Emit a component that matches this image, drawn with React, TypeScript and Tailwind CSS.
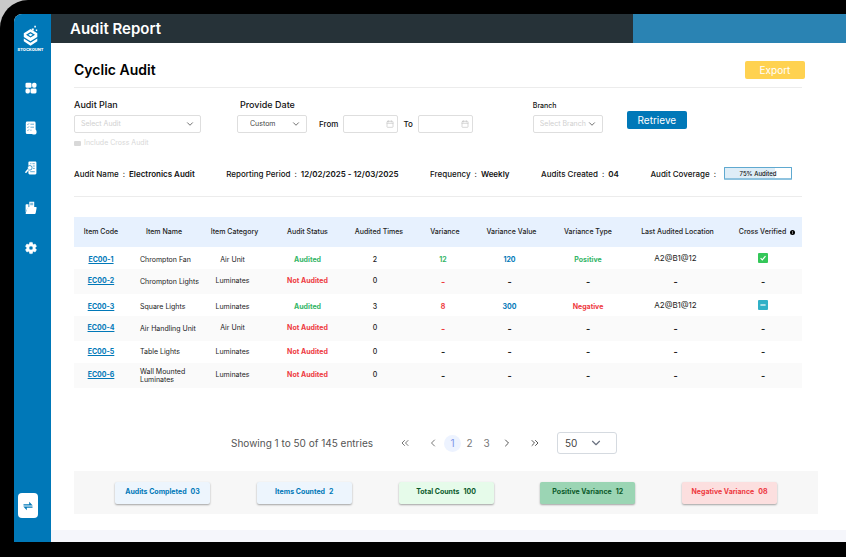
import React from "react";
import { Calendar, ChevronDown, ChevronLeft, ChevronRight, ChevronsLeft, ChevronsRight } from "lucide-react";
import clsx from "clsx";

type Item = {
  code: string;
  name: string;
  category: string;
  audited: boolean;
  flagged?: boolean;
  times: number;
  variance: string;
  value: string;
  type: string;
  location: string;
  cross: "yes" | "partial" | "-";
};

const items: Item[] = [
  { code: "EC00-1", name: "Chrompton Fan", category: "Air Unit", audited: true, times: 2, variance: "12", value: "120", type: "Positive", location: "A2@B1@12", cross: "yes" },
  { code: "EC00-2", name: "Chrompton Lights", category: "Luminates", audited: false, flagged: true, times: 0, variance: "-", value: "-", type: "-", location: "-", cross: "-" },
  { code: "EC00-3", name: "Square Lights", category: "Luminates", audited: true, flagged: true, times: 3, variance: "8", value: "300", type: "Negative", location: "A2@B1@12", cross: "partial" },
  { code: "EC00-4", name: "Air Handling Unit", category: "Air Unit", audited: false, flagged: true, times: 0, variance: "-", value: "-", type: "-", location: "-", cross: "-" },
  { code: "EC00-5", name: "Table Lights", category: "Luminates", audited: false, times: 0, variance: "-", value: "-", type: "-", location: "-", cross: "-" },
  { code: "EC00-6", name: "Wall Mounted Luminates", category: "Luminates", audited: false, times: 0, variance: "-", value: "-", type: "-", location: "-", cross: "-" },
];

const totals = [
  { label: "Audits Completed", value: "03", style: "bg-[#edf5fd] text-[#0078b8]" },
  { label: "Items Counted", value: "2", style: "bg-[#edf5fd] text-[#0078b8]" },
  { label: "Total Counts", value: "100", style: "bg-[#e6fbea] text-[#0b5a2b]" },
  { label: "Positive Variance", value: "12", style: "bg-[#9bd5b4] text-[#0b5a2b]" },
  { label: "Negative Variance", value: "08", style: "bg-[#fcdfdf] text-[#ee3a3f]" },
];

function Logo() {
  return (
    <div className="flex flex-col items-center text-white">
      <svg viewBox="0 0 16 22" className="h-[22px] w-4" fill="currentColor">
        <path d="M7.500 4 14.300 8.300V12L7.500 16.200.800 12V8.300Z" />
        <path d="M.8 13.600 7.500 17.800 14.300 13.600V16.300L7.500 20.800.8 16.300Z" />
        <path d="M3 9.700 7.500 7 12 9.700 7.500 12.600Z" fill="#0078b8" />
        <path d="M5.300 9.800 7.500 8.500 9.700 9.800 7.500 11.200Z" />
        <path d="M8.800 3.400h2v2h-2zM11.300.8h1.600v1.600h-1.600zM12.800 4.600h1.400v1.400h-1.400z" />
      </svg>
      <span className="text-[4px] leading-[6px] font-extrabold">STOCKOUNT</span>
    </div>
  );
}

function DashboardIcon() {
  return (
    <svg viewBox="0 0 12 12" className="size-3" fill="currentColor">
      <rect x="0.5" y="0.8" width="6" height="5" rx="1.3" />
      <rect x="7.1" y="0.8" width="4.400" height="5" rx="1.7" />
      <rect x="0.5" y="6.400" width="4.400" height="5" rx="1.7" />
      <rect x="5.500" y="6.400" width="6" height="5" rx="1.3" />
    </svg>
  );
}

function ChecklistIcon() {
  return (
    <svg viewBox="0 0 12 14" className="h-3.5 w-3" fill="none">
      <rect x="0.8" y="0.5" width="9.8" height="12.600" rx="1.4" fill="white" />
      <path d="m2.300 3 .6.6L4 2.400M2.300 6l.6.6L4 5.400M2.300 9l.6.6L4 8.400M5.400 3.200H9M5.400 6.200H9M5.400 9.200h1.200" stroke="#0078b8" strokeWidth="0.6" />
      <circle cx="9" cy="10.900" r="2.600" fill="white" />
    </svg>
  );
}

function SearchListIcon() {
  return (
    <svg viewBox="0 0 12 14" className="h-3.5 w-3" fill="none">
      <path d="M4.400.5h5.800c.7 0 1.200.5 1.200 1.200v10.400c0 .8-.5 1.300-1.200 1.300H4.600c-.7 0-1.200-.5-1.200-1.300V1.600C3.400 1 3.800.5 4.400.5Z" fill="white" />
      <path d="M5.200 2.700h1.200M7.400 2.700h2.400M7.800 5h2M8 7.400h1.800M5.200 10.700h4.600" stroke="#0078b8" strokeWidth="0.6" />
      <circle cx="4.800" cy="6.800" r="2.300" fill="white" stroke="#0078b8" strokeWidth="0.7" />
      <path d="M3 8.800.9 11.200" stroke="white" strokeWidth="1.5" strokeLinecap="round" />
    </svg>
  );
}

function FolderIcon() {
  return (
    <svg viewBox="0 0 12 14" className="h-3.5 w-3" fill="white">
      <path d="M4.300.8h4.900v6H4.300z" />
      <path d="M5.200 2.300h3M5.200 3.700h3" stroke="#0078b8" strokeWidth="0.6" />
      <path d="M.6 4.300c0-.7.4-1 1-1h1.900v2.600L1.700 8.800.6 11.500Z" />
      <path d="M3.600 6h7.100c.7 0 1 .4.900 1l-.9 5c-.1.600-.5.900-1.100.9H1.400c-.6 0-.9-.4-.7-1L2.500 6.800c.2-.5.500-.8 1.100-.8Z" />
    </svg>
  );
}

function GearIcon() {
  return (
    <svg viewBox="0 0 24 24" className="size-3.5" fill="currentColor" stroke="currentColor" strokeWidth="1">
      <path d="M19.140 12.940c.04-.3.06-.61.06-.94 0-.32-.02-.64-.07-.94l2.030-1.580a.49.49 0 0 0 .12-.61l-1.920-3.320a.488.488 0 0 0-.59-.22l-2.390.96c-.5-.38-1.030-.7-1.620-.94L14.400 2.810a.484.484 0 0 0-.48-.41h-3.840c-.24 0-.43.17-.47.41L9.250 5.350c-.59.24-1.130.57-1.620.94l-2.390-.96a.484.484 0 0 0-.59.22L2.740 8.870c-.12.21-.08.47.12.61l2.030 1.580c-.05.3-.09.63-.09.94s.02.64.07.94l-2.030 1.580a.49.49 0 0 0-.12.61l1.920 3.320c.12.22.37.29.59.22l2.390-.96c.5.38 1.030.7 1.620.94l.36 2.540c.05.24.24.41.48.41h3.840c.24 0 .44-.17.47-.41l.36-2.540c.59-.24 1.130-.56 1.620-.94l2.390.96c.22.08.47 0 .59-.22l1.920-3.320a.49.49 0 0 0-.12-.61zM12 15.600A3.600 3.600 0 1 1 12 8.400a3.600 3.600 0 0 1 0 7.200Z" />
    </svg>
  );
}

const menu = [
  { label: "Dashboard", icon: DashboardIcon },
  { label: "Audit plans", icon: ChecklistIcon },
  { label: "Audit search", icon: SearchListIcon },
  { label: "Files", icon: FolderIcon },
  { label: "Settings", icon: GearIcon },
];

function Sidebar() {
  return (
    <aside className="flex w-[37px] shrink-0 flex-col items-center bg-[#0078b8] pt-[11px] pr-1 pb-6 text-white">
      <Logo />
      <nav className="mt-7 flex flex-col gap-[26px]">
        {menu.map(({ label, icon: Icon }) => (
          <a key={label} href="#" aria-label={label} className="flex h-3.5 items-center justify-center">
            <Icon />
          </a>
        ))}
      </nav>
      <button aria-label="Switch" className="mt-auto mr-1.5 flex h-[25px] w-5 items-center justify-center rounded-[4px] bg-white">
        <svg viewBox="0 0 10 10" className="size-2.5" fill="#0078b8">
          <path d="M.5 3.200h5.700V.8L9.700 4.500H.5ZM9.500 6.800H3.800v2.400L.3 5.500h9.200Z" />
        </svg>
      </button>
    </aside>
  );
}

function Select({ id, text, muted, className }: { id: string; text: string; muted?: boolean; className: string }) {
  return (
    <div className={clsx("relative h-[18px]", className)}>
      <select
        id={id}
        className={clsx(
          "block size-full appearance-none rounded-[2px] border border-[#dedede] bg-white text-[7px] leading-3",
          muted ? "pl-1.5 text-[#d0d0d0]" : "pl-3 text-[#444]"
        )}
      >
        <option>{text}</option>
      </select>
      <ChevronDown className="pointer-events-none absolute top-1 right-1.5 size-2.5 text-[#555]" />
    </div>
  );
}

function DateField({ label }: { label: string }) {
  return (
    <label className="flex h-[18px] items-center gap-[5px] text-[8px] font-medium">
      {label}
      <span className="relative h-[18px] w-[55px]">
        <input type="text" className="block size-full rounded-[2px] border border-[#dedede] px-1 text-[7px]" />
        <Calendar className="pointer-events-none absolute top-[5px] right-1 size-2 text-[#c4c4c4]" />
      </span>
    </label>
  );
}

function Filters() {
  return (
    <div className="flex items-start pt-[11px]">
      <div className="w-[127px]">
        <label htmlFor="plan" className="block text-[9px] leading-[11px] font-medium">Audit Plan</label>
        <Select id="plan" text="Select Audit" muted className="mt-[5px] w-full" />
        <label className="mt-[5px] flex h-2.5 items-center gap-[3px] text-[7px] text-[#d8d8d8]">
          <input type="checkbox" className="h-[5px] w-[7px] appearance-none rounded-[1px] bg-[#d8d8d8]" />
          Include Cross Audit
        </label>
      </div>
      <div className="ml-9">
        <label htmlFor="date" className="block pl-[3px] text-[9px] leading-[11px] font-medium">Provide Date</label>
        <div className="mt-[5px] flex gap-[5px]">
          <Select id="date" text="Custom" className="mr-[7px] w-[70px]" />
          <DateField label="From" />
          <DateField label="To" />
        </div>
      </div>
      <div className="ml-[60px] w-[70px]">
        <label htmlFor="branch" className="block text-[7px] leading-[13px] font-medium">Branch</label>
        <Select id="branch" text="Select Branch" muted className="mt-[3px] w-full" />
      </div>
      <button className="mt-3 ml-6 h-[18px] w-[60px] rounded-[2px] bg-[#0078b8] text-[10px] text-white">Retrieve</button>
    </div>
  );
}

function Info({ label, children }: { label: string; children: React.ReactNode }) {
  return (
    <div className="flex items-center gap-1">
      <span className="font-medium">{label}</span>
      <span>:</span>
      <div className="font-semibold">{children}</div>
    </div>
  );
}

function ItemRow({ item }: { item: Item }) {
  const isEmpty = item.variance === "-";
  const tone = item.type === "Positive" ? "text-[#34b567]" : item.flagged && "text-[#ee3a3f]";
  const dash = isEmpty && "text-[9px]";
  return (
    <tr className="h-[22px] even:h-[25px] even:bg-[#fafafa]">
      <td className={clsx("text-center", item.audited && "pt-1")}>
        <a href="#" className="font-bold text-[#0078b8] underline">{item.code}</a>
      </td>
      <td className={clsx("pl-3 leading-2", item.audited && "pt-1")}>{item.name}</td>
      <td className={clsx("pr-1 text-center", item.audited && "pt-1")}>{item.category}</td>
      <td className={clsx("text-center font-bold", item.audited ? "pt-1 text-[#34b567]" : "text-[#ee3a3f]")}>
        {item.audited ? "Audited" : "Not Audited"}
      </td>
      <td className={clsx("pr-2 text-center font-medium", item.audited && "pt-1")}>{item.times}</td>
      <td className={clsx("pr-1 text-center font-bold", item.audited && "pt-1", tone, dash)}>{item.variance}</td>
      <td className={clsx("pr-1 text-center font-bold", item.audited && "pt-1 text-[#0078b8]", dash)}>{item.value}</td>
      <td className={clsx("text-center font-bold", item.audited && "pt-1", !isEmpty && tone, dash)}>{item.type}</td>
      <td className={clsx("pr-1 text-center", isEmpty ? "text-[9px] font-bold" : "text-[8px]")}>{item.location}</td>
      <td className={clsx("pl-1 text-center font-bold", dash)}>
        {item.cross === "-" ? (
          "-"
        ) : (
          <svg viewBox="0 0 10 10" className="mx-auto size-2.5" fill="none" stroke="white" strokeWidth="1.200">
            <rect width="10" height="10" rx="1" stroke="none" fill={item.cross === "yes" ? "#34c759" : "#30b0c7"} />
            <path d={item.cross === "yes" ? "m2.600 5.100 1.700 1.700 3.200-3.600" : "M2.400 5h5.200"} />
          </svg>
        )}
      </td>
    </tr>
  );
}

function AuditTable() {
  return (
    <table className="mt-5 w-full table-fixed text-[7px] text-[#222]">
      <colgroup>
        <col className="w-[54px]" />
        <col className="w-[76px]" />
        <col className="w-[61px]" />
        <col className="w-[85px]" />
        <col className="w-[58px]" />
        <col className="w-[74px]" />
        <col className="w-[59px]" />
        <col className="w-[94px]" />
        <col className="w-[85px]" />
        <col className="w-[82px]" />
      </colgroup>
      <thead>
        <tr className="h-[30px] bg-[#e7f1fe] whitespace-nowrap [&>th]:font-medium">
          <th>Item Code</th>
          <th className="pr-1">Item Name</th>
          <th>Item Category</th>
          <th>Audit Status</th>
          <th>Audited Times</th>
          <th>Variance</th>
          <th>Variance Value</th>
          <th>Variance Type</th>
          <th>Last Audited Location</th>
          <th>
            <span className="flex items-center justify-center gap-1 pl-3">
              Cross Verified
              <span className="flex size-[5px] items-center justify-center rounded-full bg-black">
                <span className="h-[3px] w-px bg-[#777]" />
              </span>
            </span>
          </th>
        </tr>
      </thead>
      <tbody>
        {items.map((item) => (
          <ItemRow key={item.code} item={item} />
        ))}
      </tbody>
    </table>
  );
}

function Pagination() {
  return (
    <div className="mt-11 flex h-[22px] items-center pl-[157px] text-[#777]">
      <span className="w-[168px] text-[10px] text-[#555]">Showing 1 to 50 of 145 entries</span>
      <button aria-label="First page"><ChevronsLeft className="size-3" /></button>
      <button aria-label="Previous page" className="ml-4"><ChevronLeft className="size-3" /></button>
      <button className="ml-[5px] size-[17px] rounded-full bg-[#edf3ff] text-[10px] text-[#7c93e8]">1</button>
      <button className="w-[17px] text-[10px]">2</button>
      <button className="w-[17px] text-[10px]">3</button>
      <button aria-label="Next page" className="ml-1.5"><ChevronRight className="size-3 text-[#555]" /></button>
      <button aria-label="Last page" className="ml-4"><ChevronsRight className="size-3 text-[#555]" /></button>
      <div className="relative ml-4 h-[22px] w-[60px]">
        <select aria-label="Rows per page" className="block size-full appearance-none rounded-[3px] border border-[#d5dae0] bg-white pl-[7px] text-[10px] text-[#444]">
          <option>50</option>
        </select>
        <ChevronDown className="pointer-events-none absolute top-1 right-3.5 size-3.5 text-[#6b7280]" />
      </div>
    </div>
  );
}

export default function App() {
  return (
    <div className="min-h-screen bg-[#c9c9c9] font-['Inter',sans-serif] text-[#111]">
      <div className="flex min-h-screen rounded-tl-[28px] bg-black pt-3.5 pb-[15px] pl-3.5">
        <div className="flex grow overflow-hidden rounded-tl-lg bg-white">
          <Sidebar />
          <main className="flex min-w-0 grow flex-col">
            <header className="flex h-[29px] bg-[#263238]">
              <h1 className="grow pl-[19px] text-[15px] leading-[29px] font-semibold text-white">Audit Report</h1>
              <div className="w-[213px] bg-[#2a83b3]" />
            </header>
            <div className="pr-11 pl-[23px]">
              <div className="-mr-[3px] flex items-center justify-between pt-[18px] pb-2">
                <h2 className="text-[14px] leading-[18px] font-semibold text-black">Cyclic Audit</h2>
                <button className="h-[18px] w-[60px] rounded-[2px] bg-[#ffd250] text-[10px] text-white">Export</button>
              </div>
              <div className="border-y border-[#ececec] pb-4">
                <Filters />
                <div className="mt-[19px] flex h-[13px] items-center justify-between pr-2.5 text-[8px]">
                  <Info label="Audit Name">Electronics Audit</Info>
                  <Info label="Reporting Period">12/02/2025 - 12/03/2025</Info>
                  <Info label="Frequency">Weekly</Info>
                  <Info label="Audits Created">04</Info>
                  <Info label="Audit Coverage">
                    <div className="relative ml-1 h-[13px] w-[68px] rounded-[1px] border border-b-2 border-[#5fa9d0] border-b-[#8fc3df]">
                      <div className="h-full bg-[#deedf7]" style={{ width: "75%" }} />
                      <span className="absolute inset-0 text-center text-[6px] leading-[11px] font-medium">75% Audited</span>
                    </div>
                  </Info>
                </div>
              </div>
              <AuditTable />
              <Pagination />
            </div>
            <div className="mt-[17px] mr-7 ml-[23px] flex h-[43px] items-center justify-between bg-[#f7f7f7] px-[41px]">
              {totals.map((total) => (
                <div
                  key={total.label}
                  className={clsx("flex h-[22px] w-[95px] items-center justify-center gap-1 rounded-[2px] text-[7px] font-bold whitespace-nowrap shadow-[0_1px_2px_rgba(0,0,0,0.35)]", total.style)}
                >
                  <span>{total.label}</span>
                  <span>{total.value}</span>
                </div>
              ))}
            </div>
            <footer className="mt-4 min-h-3 grow bg-[#f5f6fb]" />
          </main>
        </div>
      </div>
    </div>
  );
}
